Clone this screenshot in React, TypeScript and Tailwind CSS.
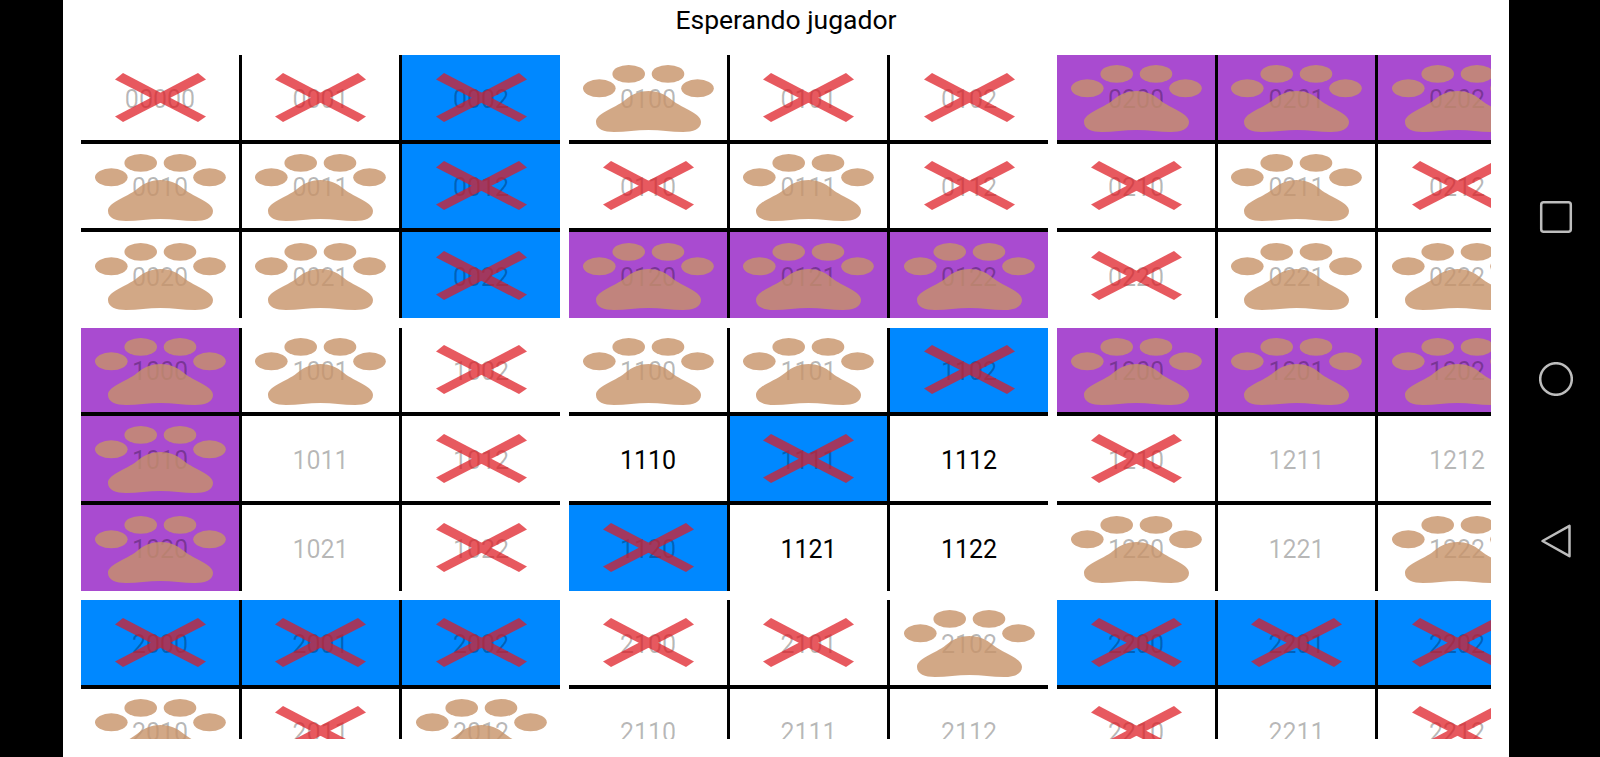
type Cell = { id: string; mark: 'x' | 'paw' | 'none'; bg: 'white' | 'blue' | 'purple'; active?: boolean };

// x = cross, p = paw, X = cross on blue, P = paw on purple, . = empty, o = empty + playable
const boards: Record<string, string> = {
  '00': 'xxX ppX ppX',
  '01': 'pxx xpx PPP',
  '02': 'PPP xpx xpp',
  '10': 'Ppx P.x P.x',
  '11': 'ppX oXo Xoo',
  '12': 'PPP x.. p.p',
  '20': 'XXX pxp ...',
  '21': 'xxp ... ...',
  '22': 'XXX x.x ...',
};

const boardOrder = ['00', '01', '02', '10', '11', '12', '20', '21', '22'];

function parseCell(boardId: string, row: number, col: number, code: string): Cell {
  let id = `${boardId}${row}${col}`;
  if (id === '0000') id = '00000';
  if (code === 'x') return { id, mark: 'x', bg: 'white' };
  if (code === 'X') return { id, mark: 'x', bg: 'blue' };
  if (code === 'p') return { id, mark: 'paw', bg: 'white' };
  if (code === 'P') return { id, mark: 'paw', bg: 'purple' };
  if (code === 'o') return { id, mark: 'none', bg: 'white', active: true };
  return { id, mark: 'none', bg: 'white' };
}

function Cross() {
  return (
    <svg width="91" height="49" viewBox="0 0 91 49" className="absolute opacity-[0.72]">
      <path d="M8 0 L91 43.5 L83 49 L0 6.5 Z" fill="#df1a22" />
      <path d="M83 0 L91 6.5 L8 49 L0 43.5 Z" fill="#df1a22" />
    </svg>
  );
}

function Paw() {
  return (
    <svg width="131" height="68" viewBox="0 0 131 68" className="absolute mt-[4px] opacity-80">
      <g fill="#c89369">
        <ellipse cx="16.3" cy="23.3" rx="16.3" ry="9" />
        <ellipse cx="45.7" cy="8.9" rx="16.3" ry="8.9" />
        <ellipse cx="85" cy="8.9" rx="16.3" ry="8.9" />
        <ellipse cx="114.5" cy="23.3" rx="16.3" ry="9" />
        <path d="M65.5 26 C74 26 82 29 89 35 C100 44 118 48 118 57 C118 64 110 67 100 67 C88 67 78 65 65.5 65 C53 65 43 67 31 67 C21 67 13 64 13 57 C13 48 31 44 42 35 C49 29 57 26 65.5 26 Z" />
      </g>
    </svg>
  );
}

function BoardCell({ cell, row, col }: { cell: Cell; row: number; col: number }) {
  const bg = cell.bg === 'blue' ? 'bg-[#0088ff]' : cell.bg === 'purple' ? 'bg-[#a94bd0]' : 'bg-white';
  return (
    <div
      className={`relative flex items-center justify-center border-black ${bg} ${col < 2 ? 'border-r-[3px]' : ''} ${row < 2 ? 'border-b-[4px]' : ''}`}
    >
      <span className={`mt-[4px] text-[25px] leading-none ${cell.active ? 'text-black' : 'text-black/[0.28]'}`}>{cell.id}</span>
      {cell.mark === 'paw' && <Paw />}
      {cell.mark === 'x' && <Cross />}
    </div>
  );
}

function Board({ id }: { id: string }) {
  const rows = boards[id].split(' ');
  return (
    <div className="grid grid-cols-[161px_160px_158px] grid-rows-[88.5px_88.5px_86px]">
      {rows.map((r, row) =>
        r.split('').map((code, col) => <BoardCell key={`${row}${col}`} cell={parseCell(id, row, col, code)} row={row} col={col} />)
      )}
    </div>
  );
}

function NavBar() {
  return (
    <div className="flex w-[91px] flex-col items-center justify-center gap-[128px] bg-black pl-[2px]">
      <svg width="34" height="34" viewBox="0 0 34 34" fill="none" stroke="#bdbdbd" strokeWidth="2.5">
        <rect x="2.2" y="2.2" width="29.6" height="29.6" rx="2.5" />
      </svg>
      <svg width="34" height="34" viewBox="0 0 34 34" fill="none" stroke="#bdbdbd" strokeWidth="2.5">
        <circle cx="17" cy="17" r="15.8" />
      </svg>
      <svg width="34" height="34" viewBox="0 0 34 34" fill="none" stroke="#bdbdbd" strokeWidth="2.5" strokeLinejoin="round">
        <path d="M3.5 17 L30.5 1.8 L30.5 32.2 Z" />
      </svg>
    </div>
  );
}

export default function App() {
  return (
    <div className="flex h-[757px] w-[1600px] overflow-hidden bg-black font-['Roboto',sans-serif]">
      <div className="w-[63px]" />
      <div className="flex w-[1446px] flex-col bg-white">
        <div className="flex h-[55px] items-start justify-center pt-[4px] text-[26.5px] leading-[32px] text-black">Esperando jugador</div>
        <div className="ml-[18px] h-[684px] w-[1410px] overflow-hidden">
          <div className="grid w-[1455px] grid-cols-[479px_479px_479px] gap-x-[9px] gap-y-[9.5px]">
            {boardOrder.map((id) => (
              <Board key={id} id={id} />
            ))}
          </div>
        </div>
      </div>
      <NavBar />
    </div>
  );
}
